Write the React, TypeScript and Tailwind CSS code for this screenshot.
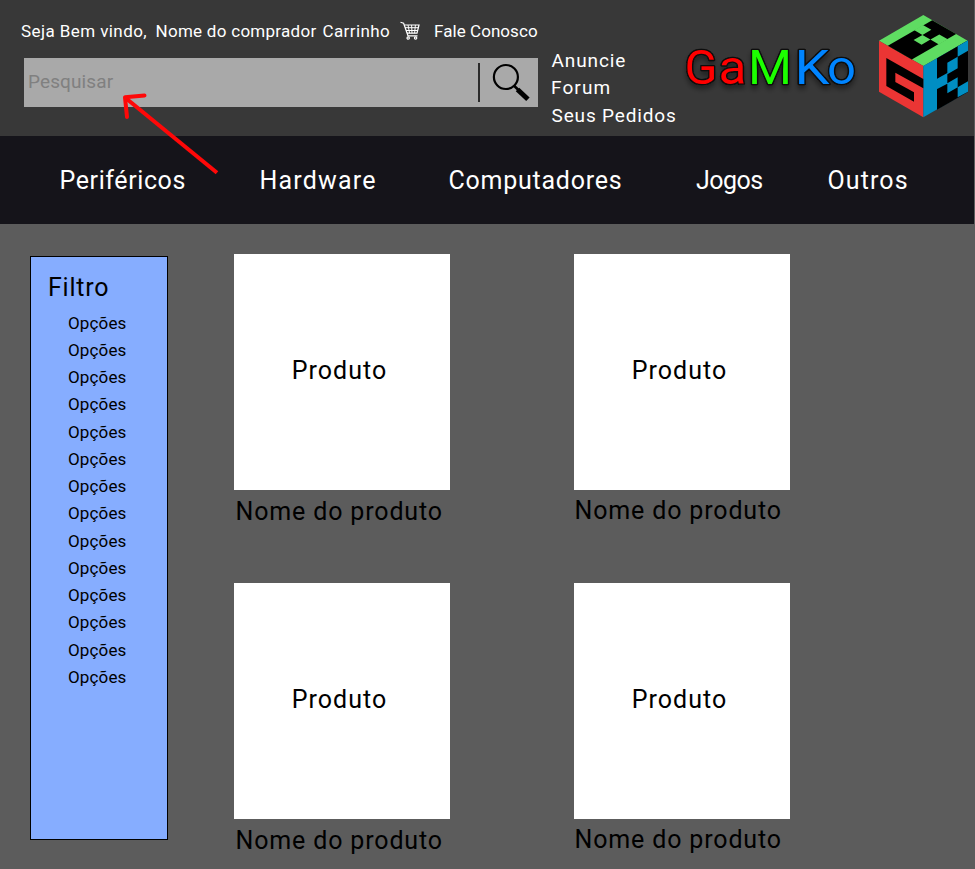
const options = Array.from({ length: 14 }, () => "Opções");

function Cube() {
  return (
    <svg className="mt-[5px] h-[120px] w-[104px] shrink-0" viewBox="0 0 312 360">
      <path d="M160 30 293 107 160 183 27 107Z" fill="#5fdc62" />
      <path d="M27 107 160 183V337L27 260Z" fill="#eb3534" />
      <path d="M160 183 293 107V260L160 337Z" fill="#008ec3" />
      {/* M on the top face */}
      <g transform="matrix(26.6 15.4 -26.6 15.3 160 30)">
        <path d="M1 0H3.7V5H1Z" fill="#000" />
        <path d="M.95 1H1.9V2H.95ZM1.9 2H2.8V3H1.9ZM2.8 1H3.75V2H2.8Z" fill="#5fdc62" />
      </g>
      {/* G on the left face */}
      <path d="M49 159 160 222V250L76 203V231L132 262V290L49 243Z" fill="#000" />
      {/* K on the right face */}
      <path d="M201 160 294 106V261L201 314Z" fill="#000" />
      <path
        d="M263 124 294 106V137L263 155ZM232 173 263 155V190L232 208ZM200 222 232 204V236L200 253ZM232 235 263 217V247L232 265ZM263 247 294 229V260L263 277Z"
        fill="#008ec3"
      />
    </svg>
  );
}

function Wordmark() {
  return (
    <svg
      className="h-[136px] w-[188px] shrink-0 font-['Roboto',sans-serif] text-[48px] font-normal"
      viewBox="0 0 188 136"
      strokeWidth="2.6"
      stroke="#0a0a0a"
      strokeLinejoin="round"
    >
      <defs>
        <filter id="shade" x="-10%" y="-20%" width="120%" height="160%">
          <feDropShadow dx="0" dy="4" stdDeviation="2.5" floodColor="#000" floodOpacity="0.4" />
        </filter>
      </defs>
      <g filter="url(#shade)" paintOrder="stroke" fill="currentColor">
        <text x="2.5" y="84" textLength="33" lengthAdjust="spacingAndGlyphs" className="text-[#ff0000]">G</text>
        <text x="36.5" y="84" textLength="28" lengthAdjust="spacingAndGlyphs" className="text-[#ff0000]">a</text>
        <text x="66" y="84" textLength="44" lengthAdjust="spacingAndGlyphs" className="text-[#1eff00]">M</text>
        <text x="112.5" y="84" textLength="35" lengthAdjust="spacingAndGlyphs" className="text-[#0084ff]">K</text>
        <text x="145" y="84" textLength="29" lengthAdjust="spacingAndGlyphs" className="text-[#0084ff]">o</text>
      </g>
    </svg>
  );
}

function Cart() {
  return (
    <svg className="ml-[9px] h-[20px] w-[21px] -translate-y-px" viewBox="0 0 21 20" fill="none" stroke="#fff" strokeWidth="1.2">
      <path d="M.5 1.2 3.6 2.2 8 14.8H17.5" />
      <path d="M4.3 4H19L17 12.2H7" />
      <path d="M5 6.7H18.3M6 9.5H17.6M8 4 9.6 12.2M11.6 4 12 12.2M15.4 4 14.6 12.2" strokeWidth="1" />
      <circle cx="8.2" cy="17" r="1.2" />
      <circle cx="15.6" cy="17" r="1.2" />
    </svg>
  );
}

function Search() {
  return (
    <div className="ml-[23.5px] mt-[7px] flex h-[49px] w-[514.5px] items-center bg-[#a9a9a9] pl-[4.5px]">
      <span className="w-[450px] whitespace-nowrap text-[19px] tracking-[0.12px] text-[#808080]">Pesquisar</span>
      <span className="h-[39px] w-[2px] bg-[#2b2b2b]" />
      <svg className="h-[49px] w-[58px]" viewBox="480 58 58 49" fill="none" stroke="#000">
        <circle cx="505.9" cy="77" r="12" strokeWidth="2.2" />
        <path d="M513.8 85.5 519 90.5" strokeWidth="2.6" />
        <path d="M517.5 89.5 527.9 99.3" strokeWidth="5" />
      </svg>
    </div>
  );
}

function Header() {
  return (
    <header className="flex h-[136px] w-[974px] bg-[#383838] text-white">
      <div className="w-[551px] shrink-0">
        <div className="flex h-[51px] items-center whitespace-nowrap pl-[21px] pt-[13px] text-[17px]">
          <span className="w-[134.5px] tracking-[0.42px]">Seja Bem vindo,</span>
          <span className="w-[167px] tracking-[0.28px]">Nome do comprador</span>
          <span className="w-[68px] tracking-[0.4px]">Carrinho</span>
          <Cart />
          <span className="ml-[13.5px] tracking-[0.06px]">Fale Conosco</span>
        </div>
        <Search />
      </div>
      <div className="w-[131px] shrink-0 whitespace-nowrap pt-[47px] text-[19px] leading-[28px]">
        <div className="pl-[0.5px] tracking-[0.9px]">Anuncie</div>
        <div className="-mt-px tracking-[1.1px]">Forum</div>
        <div className="pl-[0.5px] tracking-[0.85px]">Seus Pedidos</div>
      </div>
      <Wordmark />
      <Cube />
    </header>
  );
}

function Nav() {
  return (
    <nav className="flex h-[88px] w-[974px] items-center whitespace-nowrap bg-[#15141a] pl-[59.5px] pt-[2px] text-[25px] text-white">
      <span className="w-[200px] tracking-[0.6px]">Periféricos</span>
      <span className="w-[189px] tracking-[1.2px]">Hardware</span>
      <span className="w-[247.5px] tracking-[0.75px]">Computadores</span>
      <span className="w-[131.5px] tracking-[-0.5px]">Jogos</span>
      <span className="tracking-[1.1px]">Outros</span>
    </nav>
  );
}

function Product({ raised = false }: { raised?: boolean }) {
  return (
    <div className="h-[329px] w-[216px] whitespace-nowrap text-[25px] text-black">
      <div className="flex h-[236px] items-center justify-center bg-white pb-[3px] pr-[5px] tracking-[1px]">Produto</div>
      <div className={raised ? "pt-px pl-[0.5px] leading-[40px] tracking-[0.85px]" : "pl-[1.5px] pt-[2px] leading-[40px] tracking-[0.85px]"}>
        Nome do produto
      </div>
    </div>
  );
}

export default function App() {
  return (
    <div className="relative h-[869px] w-[975px] overflow-hidden bg-[#5c5c5c] font-['Roboto',sans-serif]">
      <Header />
      <Nav />
      <main className="flex items-start">
        <aside className="ml-[29.5px] mt-[32px] h-[584px] w-[138.5px] border-[1.5px] border-black bg-[#86adff] text-black">
          <h2 className="pl-[17.5px] pt-[11px] text-[25px] leading-[40px] tracking-[0.75px]">Filtro</h2>
          <ul className="pl-[37.5px] pt-[1.5px] text-[17px] tracking-[0.15px]">
            {options.map((option, i) => (
              <li key={i} className="h-[27.25px] leading-[27.25px]">{option}</li>
            ))}
          </ul>
        </aside>
        <section className="ml-[66px] mt-[30px] grid grid-cols-[216px_216px] gap-x-[124px]">
          <Product />
          <Product raised />
          <Product />
          <Product raised />
        </section>
      </main>
      <svg
        className="pointer-events-none absolute left-[115px] top-[88px]"
        width="110"
        height="92"
        viewBox="115 88 110 92"
        fill="none"
        stroke="#ff0808"
        strokeWidth="4"
      >
        <path d="M217 172.7 125 97.5" />
        <path d="M144.5 95.5 125 97.3 127 117" strokeLinecap="round" strokeLinejoin="round" />
      </svg>
    </div>
  );
}
